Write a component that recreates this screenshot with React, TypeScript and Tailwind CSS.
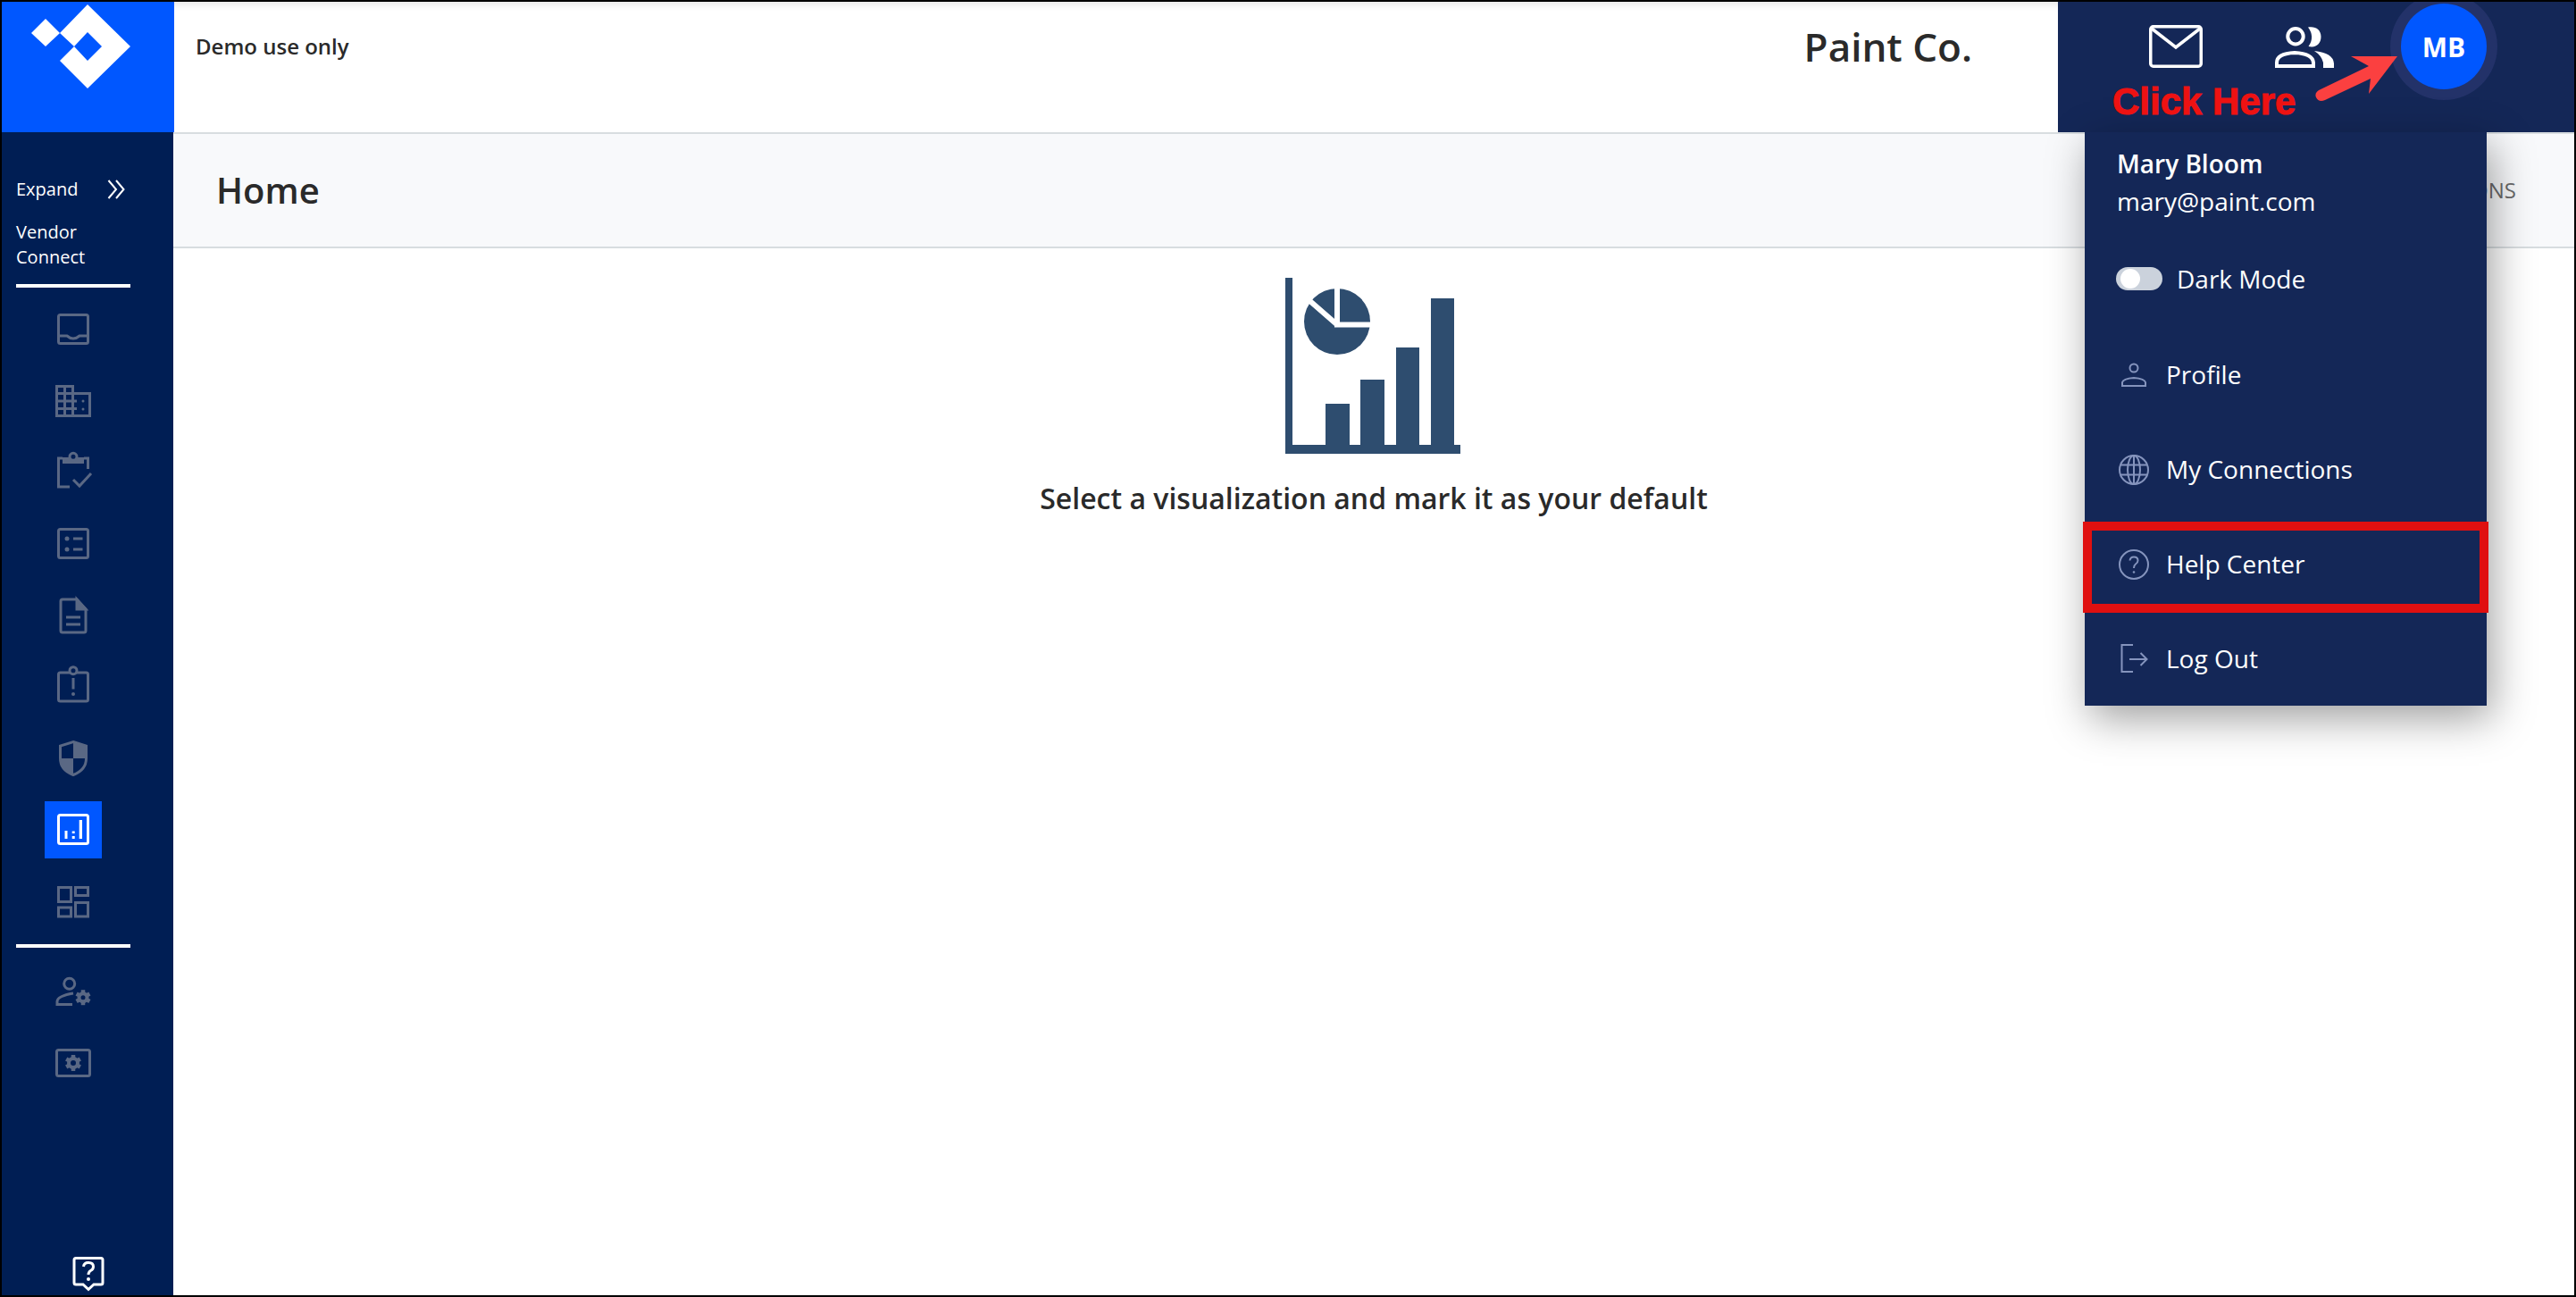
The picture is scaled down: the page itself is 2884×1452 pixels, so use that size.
import React from 'react';

const Icon = ({ children, className = '' }: { children: React.ReactNode; className?: string }) => (
  <svg viewBox="0 0 40 40" width={40} height={40} fill="none" stroke="currentColor" strokeWidth={3} className={`overflow-visible ${className}`}>
    {children}
  </svg>
);

const Gear = ({ cx, cy, r }: { cx: number; cy: number; r: number }) => (
  <g>
    <circle cx={cx} cy={cy} r={r} strokeWidth={4} />
    {[0, 60, 120, 180, 240, 300].map((a) => (
      <line
        key={a}
        x1={cx + r * Math.sin((a * Math.PI) / 180)}
        y1={cy - r * Math.cos((a * Math.PI) / 180)}
        x2={cx + (r + 4) * Math.sin((a * Math.PI) / 180)}
        y2={cy - (r + 4) * Math.cos((a * Math.PI) / 180)}
        strokeWidth={4.5}
      />
    ))}
  </g>
);

const navTop = [
  // inbox
  <>
    <rect x={3.5} y={3.5} width={33} height={32} rx={2} />
    <path d="M3.5 27H13Q20 33 27 27H36.5" />
  </>,
  // buildings
  <>
    <path d="M1.5 36.5V3.5H19.5V36.5ZM10.5 3.5V36.5M1.5 11.5H19.5M1.5 20H24M1.5 28.5H24M19.5 11.5H38.5V36.5H1.5" />
    <circle cx={31} cy={20} r={1.5} fill="currentColor" stroke="none" />
    <circle cx={31} cy={29} r={1.5} fill="currentColor" stroke="none" />
  </>,
  // clipboard check
  <>
    <path d="M8 4H3.5V36H16M32 4H36.5V16" />
    <rect x={8} y={3} width={24} height={7} fill="currentColor" stroke="none" />
    <circle cx={20} cy={2.3} r={4} fill="#001e54" />
    <path d="M20 28L27 35L40 21" />
  </>,
  // list
  <>
    <rect x={3.5} y={3.5} width={33} height={32} rx={2} />
    <circle cx={13} cy={14} r={2.5} fill="currentColor" stroke="none" />
    <circle cx={13} cy={26} r={2.5} fill="currentColor" stroke="none" />
    <path d="M20 14H30.5M20 26H30.5" />
  </>,
  // document
  <>
    <path d="M6 4Q6 2 8 2H24L34 13V37Q34 39 32 39H8Q6 39 6 37Z" />
    <path d="M24 2L34 13H24Z" fill="currentColor" />
    <path d="M12 22H28M12 30H28" />
  </>,
  // clipboard alert
  <>
    <rect x={3.5} y={4} width={33} height={32} rx={2} />
    <circle cx={20} cy={1.7} r={4} fill="#001e54" />
    <path d="M20 10V22.5" />
    <circle cx={20} cy={28} r={2} fill="currentColor" stroke="none" />
  </>,
  // shield
  <>
    <path d="M20 1.5L34.5 6V20Q34.5 33 20 38.5Q5.5 33 5.5 20V6Z" />
    <path d="M20 1.5L34.5 6V20H20ZM20 20V38.5Q5.5 33 5.5 20Z" fill="currentColor" stroke="none" />
  </>,
  // signal chart (active)
  <>
    <rect x={3.5} y={3.5} width={33} height={32} rx={2} />
    <path d="M10.5 21H13.5V30H10.5ZM18.7 21.5H21.7V24H18.7ZM18.7 27H21.7V30H18.7ZM26.7 9H30V30H26.7Z" fill="currentColor" stroke="none" />
  </>,
  // dashboard
  <>
    <rect x={3.5} y={4.5} width={14} height={16} />
    <rect x={22.5} y={4.5} width={14} height={9} />
    <rect x={3.5} y={27} width={14} height={10} />
    <rect x={22.5} y={21.5} width={14} height={15.5} />
  </>,
];

const Sidebar = () => (
  <aside className="w-[192px] shrink-0 bg-[#001e54] flex flex-col pl-4 text-white">
    <div className="w-[128px] h-[174px] shrink-0 flex flex-col">
      <div className="flex items-center justify-between mt-[50px] h-[28px] pr-[6px]">
        <span className="text-[20px] leading-[28px]">Expand</span>
        <svg viewBox="0 0 20 24" width={20} height={24} fill="none" stroke="currentColor" strokeWidth={2}>
          <path d="M1.5 2L10 12L1.5 22M10 2L18.5 12L10 22" />
        </svg>
      </div>
      <div className="text-[20px] leading-[28px] mt-[20px]">
        Vendor
        <br />
        Connect
      </div>
      <div className="h-1 shrink-0 bg-white mt-[16px]" />
    </div>
    <div className="w-[128px] flex flex-col mt-[7px] text-[#5a6884]">
      {navTop.map((icon, i) => (
        <div key={i} className="h-[80px] flex items-center justify-center">
          <div className={i === 7 ? 'w-16 h-16 bg-[#0057ff] text-white flex items-center justify-center' : 'flex items-center justify-center'}>
            <Icon>{icon}</Icon>
          </div>
        </div>
      ))}
    </div>
    <div className="w-[128px] h-1 shrink-0 bg-white mt-2" />
    <div className="w-[128px] flex flex-col mt-[9px] text-[#5a6884]">
      <div className="h-[80px] flex items-center justify-center">
        <Icon>
          <circle cx={15.7} cy={11.3} r={6} />
          <path d="M19 34.5H2V31Q2.5 25 20 22" />
          <Gear cx={31} cy={26.7} r={4.5} />
        </Icon>
      </div>
      <div className="h-[80px] flex items-center justify-center">
        <Icon>
          <rect x={1.5} y={5.5} width={37} height={29} rx={2} />
          <Gear cx={20} cy={20} r={5} />
        </Icon>
      </div>
    </div>
    <div className="mt-auto ml-[62px] mb-[3px] h-[42px]">
      <svg viewBox="0 0 38 42" width={38} height={42} fill="none" stroke="currentColor" strokeWidth={3}>
        <path d="M5 3.5H33Q35 3.5 35 5.5V31Q35 33 33 33H25L19 38.5L13 33H5Q3 33 3 31V5.5Q3 3.5 5 3.5Z" />
        <path d="M13.5 13Q14 8.5 19 8.5Q24.5 8.5 24.5 13Q24.5 16 21.5 17.5Q19 19 19 22" />
        <circle cx={19} cy={27} r={2} fill="currentColor" stroke="none" />
      </svg>
    </div>
  </aside>
);

const MenuRow = ({ label, icon, boxed }: { label: string; icon: React.ReactNode; boxed?: boolean }) => (
  <div className="relative h-[106px] flex items-center gap-4 pl-[35px]">
    <svg viewBox="0 0 40 40" width={40} height={40} fill="none" stroke="#8594bd" strokeWidth={2}>
      {icon}
    </svg>
    <span className="text-[28px] leading-[42px] text-white mb-[3px]">{label}</span>
    {boxed && <div className="absolute -left-[2px] -right-[2px] top-[5px] -bottom-px border-[10px] border-[#e01010]" />}
  </div>
);

export default function App() {
  return (
    <div className="relative h-screen w-full border-2 border-black bg-white flex flex-col overflow-hidden font-['Open_Sans',sans-serif] text-[#2a2a2a]">
      {/* Top bar */}
      <header className="h-[146px] shrink-0 flex">
        <div className="w-[193px] bg-[#0057ff] shrink-0">
          <svg viewBox="2 2 193 146" width={193} height={146} fill="#ffffff">
            <path d="M35 37L51 21L67 37L51 52Z" />
            <path d="M98 5L146 52L98 99L67 68L83 52L98 68L114 52L98 36L83 52L67 37Z" />
          </svg>
        </div>
        <div className="flex-1 flex items-start justify-between pl-6 pr-[96px] shadow-[inset_0_10px_10px_-8px_rgba(0,0,0,0.12)]">
          <span className="text-[24px] leading-[34px] font-semibold mt-[33px]">Demo use only</span>
          <span className="text-[44px] leading-[60px] font-semibold mt-[20px]">Paint Co.</span>
        </div>
        <div className="w-[578px] bg-[#142757] overflow-hidden pl-[102px]">
          <div className="h-[100px] flex items-center text-white">
            <svg viewBox="0 0 60 48" width={60} height={48} fill="none" stroke="currentColor" strokeWidth={3.5}>
              <rect x={1.75} y={1.75} width={56.5} height={44.5} rx={3} />
              <path d="M3 4L30 25L57 4" />
            </svg>
            <svg viewBox="0 0 66 47" width={66} height={47} fill="none" stroke="currentColor" strokeWidth={4} className="ml-[81px]">
              <circle cx={23} cy={11.7} r={8.7} />
              <path d="M37 1.5Q45 12 37.5 23C46 25 51.5 20 51.5 12C51.5 4 45 0 37 1.5Z" fill="currentColor" stroke="none" />
              <path d="M2 45V41Q2 31 22 30Q42 31 43 41V45Z" />
              <path d="M44 28Q65 30 66 42V47H54V41Q52 33 44 28Z" fill="currentColor" stroke="none" />
            </svg>
            <div className="ml-[75px] w-24 h-24 rounded-full bg-[#0057ff] shadow-[0_0_0_12px_#233269] flex items-center justify-center text-[30px] font-bold">
              MB
            </div>
          </div>
        </div>
      </header>

      <div className="flex-1 flex min-h-0">
        <Sidebar />
        <main className="flex-1 flex flex-col min-w-0">
          <div className="h-[130px] shrink-0 bg-[#f8f9fb] border-y-2 border-[#d8dde0] flex items-center justify-between pl-[48px] pr-[65px]">
            <h1 className="text-[40px] leading-[56px] font-semibold">Home</h1>
            <span className="text-[24px] text-[#6b6b6b]">VISUALIZATIONS</span>
          </div>
          <section className="flex-1 flex flex-col items-center pt-[33px]">
            <svg viewBox="1439 311 196 197" width={196} height={197} fill="#2e4d6f" className="-ml-[2px]">
              <path d="M1439 311H1447V498H1635V508H1439Z" />
              <path d="M1484 452H1511V500H1484ZM1523 425H1550V500H1523ZM1563 389H1589V500H1563ZM1602 334H1628V500H1602Z" />
              <circle cx={1497} cy={360} r={37} />
              <path d="M1497 318V363.5H1540M1497 363.5L1462 333" fill="none" stroke="#ffffff" strokeWidth={6} />
            </svg>
            <p className="text-[32px] leading-[44px] font-semibold mt-[28px]">Select a visualization and mark it as your default</p>
          </section>
        </main>
      </div>

      {/* Profile menu */}
      <div className="absolute left-[2332px] top-[146px] w-[450px] h-[642px] bg-[#142757] shadow-[6px_14px_44px_rgba(0,0,0,0.38)] text-white">
        <div className="pl-9 pt-[14px] text-[28px] leading-[42px]">
          <div className="font-semibold">Mary Bloom</div>
          <div>mary@paint.com</div>
        </div>
        <div className="mt-[45px] pl-[35px] h-[42px] flex items-center gap-4 text-[28px]">
          <div className="w-[52px] h-[26px] rounded-full bg-[#cbd2dc] flex items-center pl-[5px]">
            <div className="w-[22px] h-[22px] rounded-full bg-white" />
          </div>
          <span>Dark Mode</span>
        </div>
        <div className="mt-[34px]">
          <MenuRow
            label="Profile"
            icon={
              <>
                <circle cx={20} cy={12} r={4.5} />
                <path d="M7 32V28Q8 24 20 23Q32 24 33 28V32Z" />
              </>
            }
          />
          <MenuRow
            label="My Connections"
            icon={
              <>
                <circle cx={20} cy={20} r={16} />
                <ellipse cx={20} cy={20} rx={7} ry={16} />
                <path d="M20 4V36M5.5 14.5H34.5M5.5 25.5H34.5" />
              </>
            }
          />
          <MenuRow
            label="Help Center"
            boxed
            icon={
              <>
                <circle cx={20} cy={20} r={16} />
                <path d="M15.5 15.5Q16 11.5 20 11.5Q24.5 11.5 24.5 15.5Q24.5 18 22 19.5Q20 21 20 24" />
                <circle cx={20} cy={28.5} r={1.3} fill="#8594bd" stroke="none" />
              </>
            }
          />
          <MenuRow
            label="Log Out"
            icon={
              <>
                <path d="M19 4H6.5V34H19" />
                <path d="M15 20H34.5M27.5 13L34.5 20L27.5 27" />
              </>
            }
          />
        </div>
      </div>

      {/* Annotation over the top bar */}
      <span className="absolute left-[2363px] top-[91px] text-[42px] leading-[42px] font-bold text-[#ee1212] font-['Liberation_Sans',sans-serif] [-webkit-text-stroke:1px_#ee1212]">
        Click Here
      </span>
      <svg viewBox="2590 58 100 60" width={100} height={60} fill="#fb4040" className="absolute left-[2588px] top-[56px]">
        <path d="M2632 63L2684 63L2652 105L2654 88L2603 112Q2596 115 2593 109Q2591 104 2596 101L2652 74Z" />
      </svg>
    </div>
  );
}
